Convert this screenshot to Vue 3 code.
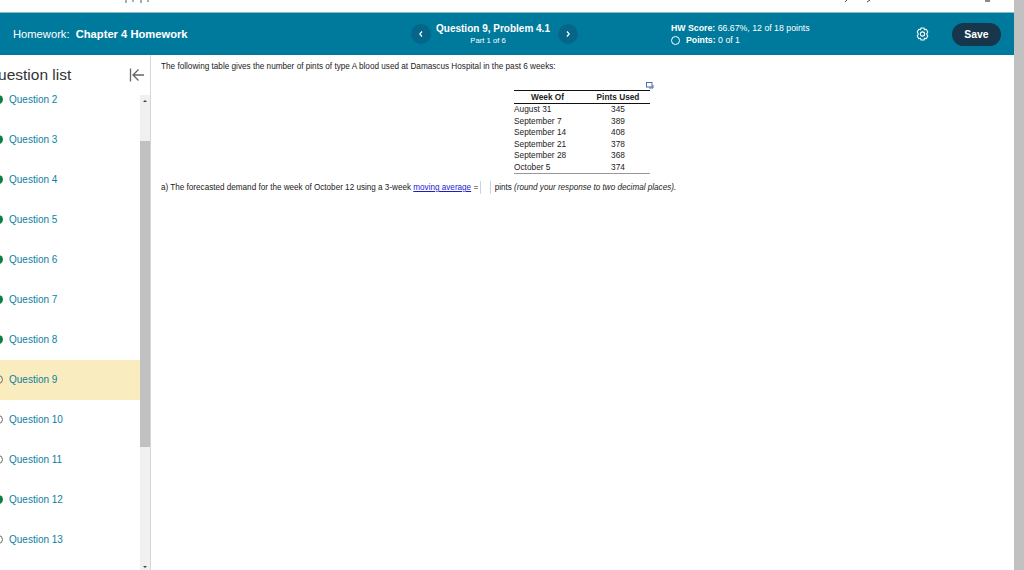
<script setup>
const questions = [
  { n: 2, state: 'done' },
  { n: 3, state: 'done' },
  { n: 4, state: 'done' },
  { n: 5, state: 'done' },
  { n: 6, state: 'done' },
  { n: 7, state: 'done' },
  { n: 8, state: 'done' },
  { n: 9, state: 'open', current: true },
  { n: 10, state: 'open' },
  { n: 11, state: 'open' },
  { n: 12, state: 'done' },
  { n: 13, state: 'open' }
]

const rows = [
  ['August 31', 345],
  ['September 7', 389],
  ['September 14', 408],
  ['September 21', 378],
  ['September 28', 368],
  ['October 5', 374]
]
</script>

<template>
  <div class="page">
    <div class="main">
      <div class="topStrip">
        <svg width="1014" height="12" viewBox="0 0 1014 12" fill="none">
          <path d="M126 0v3M133 0v2M141 0v3M148 0v2" stroke="#3b5f8f" />
          <path d="M845 2l2-2M867 2l3-2" stroke="#444" />
          <path d="M985 1h5" stroke="#888" stroke-width="2" />
        </svg>
      </div>
      <header class="bar">
        <div class="title"><span>Homework:</span> <b>Chapter 4 Homework</b></div>
        <div class="pager">
          <button class="navBtn">
            <svg width="8" height="8" viewBox="0 0 8 8"><path d="M5 1.500 2.800 4 5 6.500" fill="none" stroke="#fff" stroke-width="1.200" /></svg>
          </button>
          <div class="pagerText">
            <div class="pagerTitle">Question 9, Problem 4.1</div>
            <div class="pagerSub">Part 1 of 6</div>
          </div>
          <button class="navBtn">
            <svg width="8" height="8" viewBox="0 0 8 8"><path d="M3 1.500 5.200 4 3 6.500" fill="none" stroke="#fff" stroke-width="1.200" /></svg>
          </button>
        </div>
        <div class="score">
          <div class="scoreLine"><b>HW Score:</b> 66.67%, 12 of 18 points</div>
          <div class="pointsLine"><i class="ring"></i><span><b>Points:</b> 0 of 1</span></div>
        </div>
        <svg class="gear" width="13" height="14" viewBox="0 0 13 14" fill="none" stroke="#fff" stroke-width="1.100">
          <path d="M5 1h3l.5 1.800 1.700-.5L11.800 5l-1.200 2 1.200 2-1.600 2.700-1.700-.5L8 13H5l-.5-1.800-1.700.5L1.200 9l1.200-2-1.200-2 1.600-2.700 1.700.5z" stroke-linejoin="round" />
          <circle cx="6.500" cy="7" r="2.100" />
        </svg>
        <button class="save">Save</button>
      </header>
      <div class="body">
        <aside class="side">
          <div class="sideHead">
            <span class="sideTitle">Question list</span>
            <svg class="collapse" width="16" height="14" viewBox="0 0 16 14" fill="none" stroke="#666" stroke-width="1.300">
              <path d="M1.500 0.500v13M15 7H4M9.500 1.500 4 7l5.500 5.500" />
            </svg>
          </div>
          <div class="listWrap">
            <ul class="list">
              <li v-for="q in questions" :key="q.n" class="item" :class="{ current: q.current }">
                <i class="dot" :class="q.state"></i>
                <span>Question {{ q.n }}</span>
              </li>
            </ul>
            <div class="listScroll">
              <span class="arrow up"></span>
              <div class="listThumb"></div>
              <span class="arrow down"></span>
            </div>
          </div>
        </aside>
        <section class="content">
          <p class="intro">The following table gives the number of pints of type A blood used at Damascus Hospital in the past 6 weeks:</p>
          <div class="tableWrap">
            <svg class="copyIcon" width="8" height="8" viewBox="0 0 8 8" fill="none">
              <rect x="0.500" y="0.500" width="5.500" height="4.500" stroke="#4a6fa8" />
              <path d="M7 3v3H3" stroke="#4a6fa8" />
            </svg>
            <table class="data">
              <thead>
                <tr><th>Week Of</th><th>Pints Used</th></tr>
              </thead>
              <tbody>
                <tr v-for="r in rows" :key="r[0]">
                  <td>{{ r[0] }}</td>
                  <td class="num">{{ r[1] }}</td>
                </tr>
              </tbody>
            </table>
          </div>
          <p class="answer">
            a) The forecasted demand for the week of October 12 using a 3-week
            <a class="term">moving average</a> =
            <span class="input"></span>
            pints <em>(round your response to two decimal places).</em>
          </p>
        </section>
      </div>
    </div>
    <div class="pageScroll"></div>
  </div>
</template>

<style scoped>
.page {
  display: flex;
  height: 570px;
  overflow: hidden;
  font-family: "Liberation Sans", Arial, sans-serif;
  background: #fff;
}

.main {
  flex: 1;
  min-width: 0;
  display: flex;
  flex-direction: column;
}

.topStrip {
  height: 12px;
  flex: none;
  overflow: hidden;
}

.topStrip svg {
  display: block;
}

.pageScroll {
  width: 10px;
  flex: none;
  background: #c1c1c1;
}

.bar {
  height: 43px;
  flex: none;
  box-sizing: border-box;
  border-top: 1px solid #8fbccb;
  background: #007a9c;
  color: #fff;
  display: flex;
  align-items: center;
  padding-left: 13px;
}

.title {
  width: 398px;
  flex: none;
  font-size: 11.200px;
  white-space: pre;
}

.title b {
  margin-left: 3px;
}

.pager {
  width: 167px;
  flex: none;
  display: flex;
  align-items: center;
  justify-content: space-between;
  margin-right: 93px;
}

.navBtn {
  width: 20px;
  height: 20px;
  padding: 0;
  border: none;
  border-radius: 50%;
  background: #05668a;
  display: flex;
  align-items: center;
  justify-content: center;
}

.pagerText {
  text-align: center;
  margin-left: 1px;
  margin-right: 4px;
}

.pagerTitle {
  font-size: 10px;
  font-weight: bold;
  line-height: 13px;
}

.pagerSub {
  font-size: 7.700px;
  line-height: 10px;
  margin-top: 1px;
  padding-right: 10px;
}

.score {
  width: 245px;
  flex: none;
  font-size: 8.750px;
  line-height: 12px;
}

.pointsLine {
  display: flex;
  align-items: center;
  gap: 6px;
}

.ring {
  width: 7px;
  height: 7px;
  border: 1.500px solid #fff;
  border-radius: 50%;
  flex: none;
}

.gear {
  flex: none;
}

.save {
  margin-left: 23px;
  width: 49px;
  height: 23px;
  padding: 0;
  border: none;
  border-radius: 12px;
  background: #17364b;
  color: #fff;
  font-family: inherit;
  font-size: 10.400px;
  font-weight: bold;
}

.body {
  flex: 1;
  min-height: 0;
  display: flex;
}

.side {
  width: 151px;
  flex: none;
  box-sizing: border-box;
  border-right: 1px solid #d3d8de;
  display: flex;
  flex-direction: column;
  overflow: hidden;
}

.sideHead {
  height: 40px;
  flex: none;
  display: flex;
  align-items: center;
  justify-content: space-between;
  padding-right: 5px;
  margin-left: -14px;
}

.sideTitle {
  font-size: 15.500px;
  color: #333;
  white-space: nowrap;
}

.listWrap {
  flex: 1;
  min-height: 0;
  display: flex;
}

.list {
  flex: 1;
  min-width: 0;
  margin: -15px 0 0;
  padding: 0;
  list-style: none;
}

.item {
  height: 40px;
  box-sizing: border-box;
  padding-bottom: 2px;
  display: flex;
  align-items: center;
  gap: 6px;
  font-size: 10px;
  color: #0f7fa3;
  margin-left: -6px;
}

.item.current {
  background: #f9ecbe;
}

.dot {
  width: 9px;
  height: 9px;
  box-sizing: border-box;
  border-radius: 50%;
  flex: none;
}

.dot.done {
  background: #0a8043;
}

.dot.open {
  border: 1.500px solid #6d6d6d;
}

.listScroll {
  width: 10px;
  flex: none;
  background: #f0f0f0;
  display: flex;
  flex-direction: column;
  align-items: center;
}

.listThumb {
  width: 100%;
  height: 306px;
  margin-top: 39px;
  background: #c1c1c1;
}

.arrow {
  width: 0;
  height: 0;
  border-left: 2px solid transparent;
  border-right: 2px solid transparent;
}

.arrow.up {
  border-bottom: 2.500px solid #444;
  margin-top: 5px;
}

.arrow.down {
  border-top: 2.500px solid #444;
  margin-top: auto;
  margin-bottom: 2px;
}

.content {
  flex: 1;
  min-width: 0;
  padding-left: 10px;
  font-size: 8.150px;
  color: #222;
}

.intro {
  margin: 6px 0 0;
  line-height: 11px;
  font-size: 8.200px;
}

.tableWrap {
  position: relative;
  width: 136px;
  margin: 18px 0 0 353px;
}

.copyIcon {
  position: absolute;
  right: -4px;
  top: -8px;
}

.data {
  width: 136px;
  border-collapse: collapse;
  border-top: 1px solid #111;
  border-bottom: 1px solid #999;
  font-size: 8.300px;
}

.data th {
  font-weight: bold;
  height: 12px;
  padding: 0;
  border-bottom: 1px solid #111;
  text-align: center;
}

.data td {
  padding: 0;
  height: 11.500px;
  line-height: 11px;
}

.num {
  text-align: center;
  width: 64px;
}

.data th:last-child {
  width: 64px;
}

.data th:first-child {
  padding-right: 5px;
}

.answer {
  margin: 6px 0 0;
  line-height: 16px;
  white-space: nowrap;
}

.term {
  color: #1a1ad0;
  text-decoration: underline;
}

.input {
  display: inline-block;
  width: 9px;
  height: 13px;
  vertical-align: middle;
  margin: 0 1px 0 0;
  border-left: 1px solid #c7d3e6;
  border-right: 1px solid #c7d3e6;
}

.answer em {
  font-style: italic;
}
</style>
